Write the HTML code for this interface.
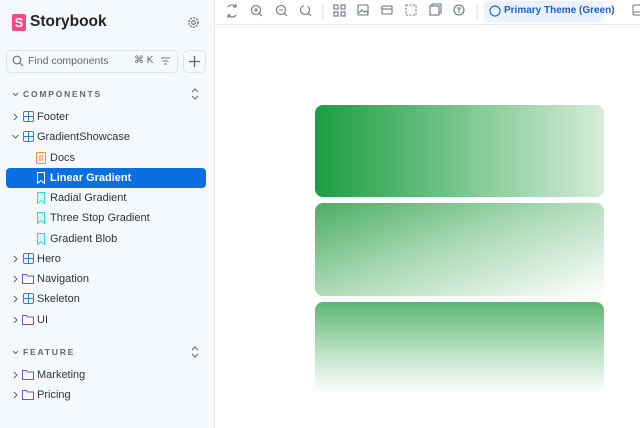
<!DOCTYPE html>
<html><head><meta charset="utf-8"><style>
*{box-sizing:border-box;margin:0;padding:0}
body{width:640px;height:428px;overflow:hidden;font-family:"Liberation Sans",sans-serif;background:#fff;position:relative;color:#2e3438}
#sb{position:absolute;left:0;top:0;width:215px;height:428px;background:#f6f9fc;border-right:1px solid #e3e8ee}
.a{position:absolute;white-space:nowrap}
.row{position:absolute;left:6px;width:200px;height:20px;font-size:11px;line-height:21px;color:#2e3438}
.row svg{position:absolute;top:4px}
.row span{position:absolute;top:0}
.sel{background:#0b6fe0;color:#fff;border-radius:4px;font-weight:bold}
.hdr{font-size:8.5px;letter-spacing:1.8px;font-weight:bold;color:#5c6870}
.card{position:absolute;left:315px;width:289px;border-radius:8px}
</style></head><body>
<div id="sb">
  <div class="a" style="left:12px;top:14px;width:14px;height:17px;background:#ff4785;border-radius:2px;color:#fff;font-weight:bold;font-size:13px;line-height:17px;text-align:center">S</div>
  <div class="a" style="left:30px;top:13px;font-size:15.5px;font-weight:bold;color:#222">Storybook</div>
  <svg class="a" style="left:187px;top:16px" width="13" height="13" viewBox="0 0 14 14"><circle cx="7" cy="7" r="2" fill="none" stroke="#6b7580" stroke-width="1.2"/><circle cx="7" cy="7" r="5" fill="none" stroke="#6b7580" stroke-width="1.5" stroke-dasharray="2 1.3"/></svg>
  <div class="a" style="left:6px;top:50px;width:172px;height:23px;border:1px solid #dde3ea;border-radius:5px;background:#f6f9fc"></div>
  <svg class="a" style="left:12px;top:55px" width="12" height="12" viewBox="0 0 12 12"><circle cx="5" cy="5" r="3.8" fill="none" stroke="#6b7580" stroke-width="1.2"/><path d="M8 8l3 3" stroke="#6b7580" stroke-width="1.2"/></svg>
  <div class="a" style="left:28px;top:55px;font-size:10.5px;color:#5c6870">Find components</div>
  <div class="a" style="left:134px;top:55px;font-size:10px;color:#5c6870">⌘ K</div>
  <svg class="a" style="left:160px;top:56px" width="11" height="10" viewBox="0 0 11 10"><path d="M1 2h9M2.5 5h6M4 8h3" stroke="#6b7580" stroke-width="1.1"/></svg>
  <div class="a" style="left:183px;top:50px;width:23px;height:23px;border:1px solid #dde3ea;border-radius:5px"></div>
  <svg class="a" style="left:188px;top:55px" width="13" height="13" viewBox="0 0 13 13"><path d="M6.5 1v11M1 6.5h11" stroke="#5c6870" stroke-width="1.3"/></svg>
  <svg class="a" style="left:12px;top:92px" width="7" height="5" viewBox="0 0 7 5"><path d="M1 1l2.5 2.5L6 1" fill="none" stroke="#5c6870" stroke-width="1"/></svg>
  <div class="a hdr" style="left:23px;top:89px">COMPONENTS</div>
  <svg class="a" style="left:191px;top:88px" width="8" height="12" viewBox="0 0 8 12"><path d="M1 4l3-3 3 3M1 8l3 3 3-3" fill="none" stroke="#5c6870" stroke-width="1"/></svg>
  <svg class="a" style="left:12px;top:350px" width="7" height="5" viewBox="0 0 7 5"><path d="M1 1l2.5 2.5L6 1" fill="none" stroke="#5c6870" stroke-width="1"/></svg>
  <div class="a hdr" style="left:23px;top:347px">FEATURE</div>
  <svg class="a" style="left:191px;top:346px" width="8" height="12" viewBox="0 0 8 12"><path d="M1 4l3-3 3 3M1 8l3 3 3-3" fill="none" stroke="#5c6870" stroke-width="1"/></svg>
</div>

<div class="row" style="top:107px"><svg style="left:6px" width="7" height="12"><path d="M2 3l3 3-3 3" fill="none" stroke="#5c6870"/></svg><svg style="left:17px" width="11" height="11" viewBox="0 0 11 11"><rect x=".5" y=".5" width="10" height="10" rx="1.5" fill="none" stroke="#2f7de1"/><path d="M5.5 1v9M1 5.5h9" stroke="#2f7de1"/></svg><span style="left:31px">Footer</span></div>
<div class="row" style="top:127px"><svg style="left:5px" width="9" height="12"><path d="M1.5 4l3 3 3-3" fill="none" stroke="#5c6870"/></svg><svg style="left:17px" width="11" height="11" viewBox="0 0 11 11"><rect x=".5" y=".5" width="10" height="10" rx="1.5" fill="none" stroke="#2f7de1"/><path d="M5.5 1v9M1 5.5h9" stroke="#2f7de1"/></svg><span style="left:31px">GradientShowcase</span></div>
<div class="row" style="top:148px"><svg style="left:30px" width="10" height="12" viewBox="0 0 10 12"><rect x=".5" y=".5" width="9" height="11" rx="1" fill="none" stroke="#f08a3c"/><path d="M2.5 4h5M2.5 6h5M2.5 8h5" stroke="#f08a3c"/></svg><span style="left:44px">Docs</span></div>
<div class="row sel" style="top:168px"><svg style="left:31px" width="8" height="12" viewBox="0 0 8 12"><path d="M.5.5h7v11L4 8.5.5 11.5z" fill="none" stroke="#fff"/></svg><span style="left:44px">Linear Gradient</span></div>
<div class="row" style="top:188px"><svg style="left:31px" width="8" height="12" viewBox="0 0 8 12"><path d="M.5.5h7v11L4 8.5.5 11.5z" fill="#d6f7f2" stroke="#37d5d3"/></svg><span style="left:44px">Radial Gradient</span></div>
<div class="row" style="top:208px"><svg style="left:31px" width="8" height="12" viewBox="0 0 8 12"><path d="M.5.5h7v11L4 8.5.5 11.5z" fill="#d6f7f2" stroke="#37d5d3"/></svg><span style="left:44px">Three Stop Gradient</span></div>
<div class="row" style="top:229px"><svg style="left:31px" width="8" height="12" viewBox="0 0 8 12"><path d="M.5.5h7v11L4 8.5.5 11.5z" fill="#d6f7f2" stroke="#37d5d3"/></svg><span style="left:44px">Gradient Blob</span></div>
<div class="row" style="top:249px"><svg style="left:6px" width="7" height="12"><path d="M2 3l3 3-3 3" fill="none" stroke="#5c6870"/></svg><svg style="left:17px" width="11" height="11" viewBox="0 0 11 11"><rect x=".5" y=".5" width="10" height="10" rx="1.5" fill="none" stroke="#2f7de1"/><path d="M5.5 1v9M1 5.5h9" stroke="#2f7de1"/></svg><span style="left:31px">Hero</span></div>
<div class="row" style="top:269px"><svg style="left:6px" width="7" height="12"><path d="M2 3l3 3-3 3" fill="none" stroke="#5c6870"/></svg><svg style="left:16px" width="12" height="11" viewBox="0 0 12 11"><path d="M.5 1.5h4l1 1.5h6v7.5H.5z" fill="none" stroke="#7a52c6"/></svg><span style="left:31px">Navigation</span></div>
<div class="row" style="top:289px"><svg style="left:6px" width="7" height="12"><path d="M2 3l3 3-3 3" fill="none" stroke="#5c6870"/></svg><svg style="left:17px" width="11" height="11" viewBox="0 0 11 11"><rect x=".5" y=".5" width="10" height="10" rx="1.5" fill="none" stroke="#2f7de1"/><path d="M5.5 1v9M1 5.5h9" stroke="#2f7de1"/></svg><span style="left:31px">Skeleton</span></div>
<div class="row" style="top:310px"><svg style="left:6px" width="7" height="12"><path d="M2 3l3 3-3 3" fill="none" stroke="#5c6870"/></svg><svg style="left:16px" width="12" height="11" viewBox="0 0 12 11"><path d="M.5 1.5h4l1 1.5h6v7.5H.5z" fill="none" stroke="#7a52c6"/></svg><span style="left:31px">UI</span></div>
<div class="row" style="top:365px"><svg style="left:6px" width="7" height="12"><path d="M2 3l3 3-3 3" fill="none" stroke="#5c6870"/></svg><svg style="left:16px" width="12" height="11" viewBox="0 0 12 11"><path d="M.5 1.5h4l1 1.5h6v7.5H.5z" fill="none" stroke="#7a52c6"/></svg><span style="left:31px">Marketing</span></div>
<div class="row" style="top:385px"><svg style="left:6px" width="7" height="12"><path d="M2 3l3 3-3 3" fill="none" stroke="#5c6870"/></svg><svg style="left:16px" width="12" height="11" viewBox="0 0 12 11"><path d="M.5 1.5h4l1 1.5h6v7.5H.5z" fill="none" stroke="#7a52c6"/></svg><span style="left:31px">Pricing</span></div>

<div class="a" style="left:215px;top:24px;width:425px;height:1px;background:#e6ebf0"></div>
<svg class="a" style="left:222px;top:0" width="400" height="22" viewBox="0 0 400 22" fill="none" stroke="#6b7580" stroke-width="1.1">
  <path d="M6 7a5 5 0 0 1 8 0M14 4v3h-3M14 15a5 5 0 0 1-8 0M6 18v-3h3"/>
  <circle cx="34" cy="10" r="4.5"/><path d="M37.5 13.5l2.5 2.5M32 10h4M34 8v4"/>
  <circle cx="59" cy="10" r="4.5"/><path d="M62.5 13.5l2.5 2.5M57 10h4"/>
  <circle cx="83" cy="10" r="4.5" stroke-dasharray="20 4"/><path d="M86.5 13.5l2.5 2.5"/>
  <path d="M101 4v16" stroke="#dde3ea"/>
  <rect x="112" y="5" width="4" height="4"/><rect x="119" y="5" width="4" height="4"/><rect x="112" y="12" width="4" height="4"/><rect x="119" y="12" width="4" height="4"/>
  <rect x="136" y="5" width="10" height="10" rx="1"/><path d="M137 13l3-3 2 2 2-1 2 2"/>
  <rect x="160" y="6" width="10" height="8" rx="1"/><path d="M160 9h10"/>
  <rect x="184" y="5" width="10" height="10" stroke-dasharray="2 1.5"/>
  <rect x="208" y="6" width="9" height="9"/><path d="M210 6V4h9v9h-2"/>
  <circle cx="237" cy="10" r="5"/><path d="M235 8h4M237 8v5"/>
  <path d="M255 4v16" stroke="#dde3ea"/>
</svg>
<div class="a" style="left:484px;top:1px;width:120px;height:21px;background:#eaf3fd;border-radius:4px"></div>
<svg class="a" style="left:489px;top:5px" width="12" height="12"><circle cx="6" cy="6" r="5" fill="none" stroke="#1e6fd9" stroke-width="1.2"/></svg>
<div class="a" style="left:504px;top:5px;font-size:10px;font-weight:bold;color:#1e5fc0">Primary Theme (Green)</div>
<svg class="a" style="left:632px;top:4px" width="10" height="12"><rect x="1" y="1" width="10" height="10" rx="1" fill="none" stroke="#6b7580"/><path d="M1 8h10" stroke="#6b7580"/></svg>

<div class="card" style="top:105px;height:92px;background:linear-gradient(90deg,#1a9e42,#d6ecd9)"></div>
<div class="card" style="top:203px;height:93px;background:linear-gradient(160deg,#4aae63 0%,#a8d8b3 45%,#ffffff 100%)"></div>
<div class="card" style="top:302px;height:92px;background:linear-gradient(180deg,#5cb572 0%,#b5dfbf 50%,#ffffff 100%)"></div>
</body></html>
